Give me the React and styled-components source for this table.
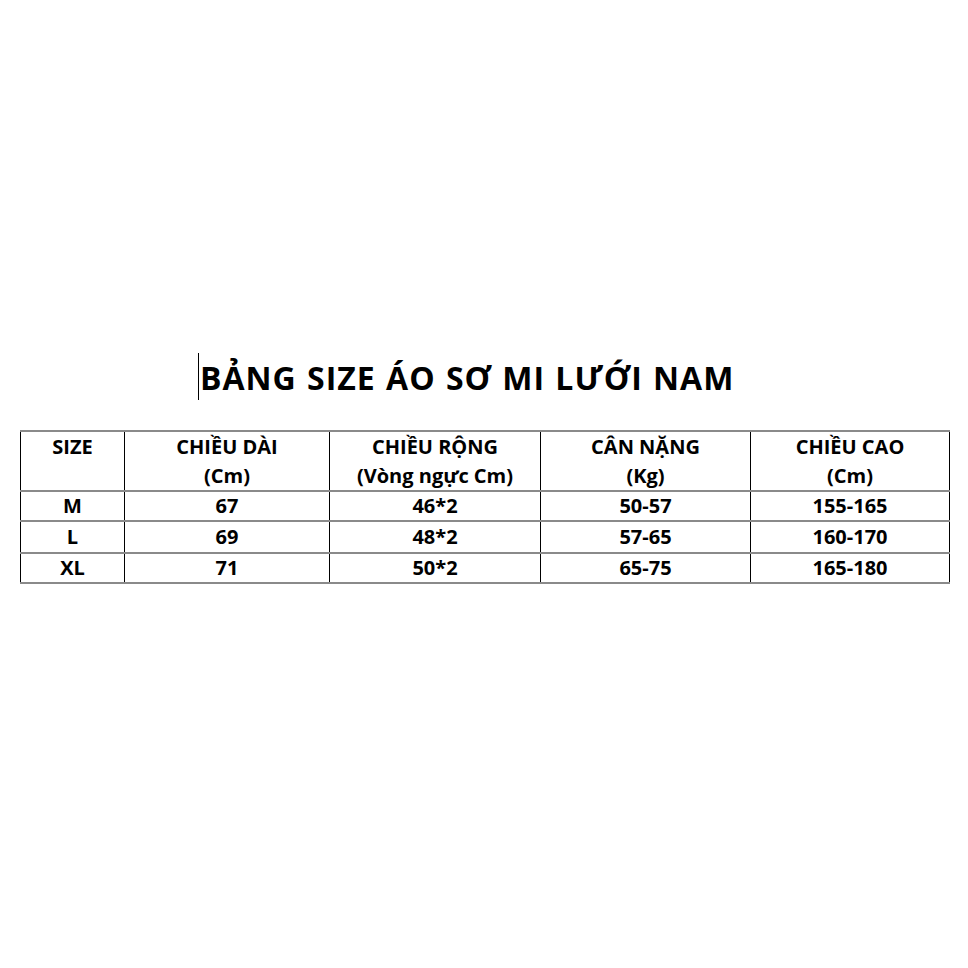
import React from "react";
import styled, { createGlobalStyle } from "styled-components";

const Global = createGlobalStyle`
  html, body { margin: 0; padding: 0; background: #fff; }
  body { font-family: "Open Sans", "Liberation Sans", sans-serif; color: #000; }
`;

const Page = styled.div`
  width: 968px;
  height: 968px;
  box-sizing: border-box;
  padding: 354px 0 0 20px;
  display: flex;
  flex-direction: column;
`;

const TitleRow = styled.div`
  display: flex;
  align-items: flex-start;
  padding-left: 178px;
  height: 76px;
`;

const Cursor = styled.span`
  width: 1px;
  height: 47px;
  margin-top: -1px;
  background: #000;
  margin-right: 1px;
`;

const Title = styled.h1`
  margin: 0;
  font-size: 32px;
  font-weight: 700;
  line-height: 47px;
  letter-spacing: 1px;
  word-spacing: 1px;
  white-space: nowrap;
`;

const Table = styled.table`
  border-collapse: collapse;
  width: 929px;
  table-layout: fixed;
  font-weight: 700;
  font-size: 20px;
`;

const Cell = styled.td`
  border-left: 1px solid #000;
  border-right: 1px solid #000;
  border-top: 2px solid #8a8a8a;
  border-bottom: 2px solid #8a8a8a;
  text-align: center;
  vertical-align: ${(p) => (p.$top ? "top" : "middle")};
  padding: 0;
  height: ${(p) => p.$h}px;
  line-height: ${(p) => (p.$top ? "29px" : "26px")};
  white-space: nowrap;
`;

const widths = [104, 205, 211, 210, 199];

const header = [
  ["SIZE"],
  ["CHIỀU DÀI", "(Cm)"],
  ["CHIỀU RỘNG", "(Vòng ngực Cm)"],
  ["CÂN NẶNG", "(Kg)"],
  ["CHIỀU CAO", "(Cm)"],
];

const rows = [
  { h: 28, cells: ["M", "67", "46*2", "50-57", "155-165"] },
  { h: 30, cells: ["L", "69", "48*2", "57-65", "160-170"] },
  { h: 28, cells: ["XL", "71", "50*2", "65-75", "165-180"] },
];

export default function App() {
  return (
    <>
      <Global />
      <Page>
        <TitleRow>
          <Cursor />
          <Title>BẢNG SIZE ÁO SƠ MI LƯỚI NAM</Title>
        </TitleRow>
        <Table>
          <colgroup>
            {widths.map((w, i) => (
              <col key={i} style={{ width: w }} />
            ))}
          </colgroup>
          <tbody>
            <tr>
              {header.map((lines, i) => (
                <Cell key={i} $top $h={56}>
                  {lines.map((l, j) => (
                    <div key={j}>{l}</div>
                  ))}
                </Cell>
              ))}
            </tr>
            {rows.map((r, i) => (
              <tr key={i}>
                {r.cells.map((c, j) => (
                  <Cell key={j} $h={r.h}>
                    {c}
                  </Cell>
                ))}
              </tr>
            ))}
          </tbody>
        </Table>
      </Page>
    </>
  );
}
